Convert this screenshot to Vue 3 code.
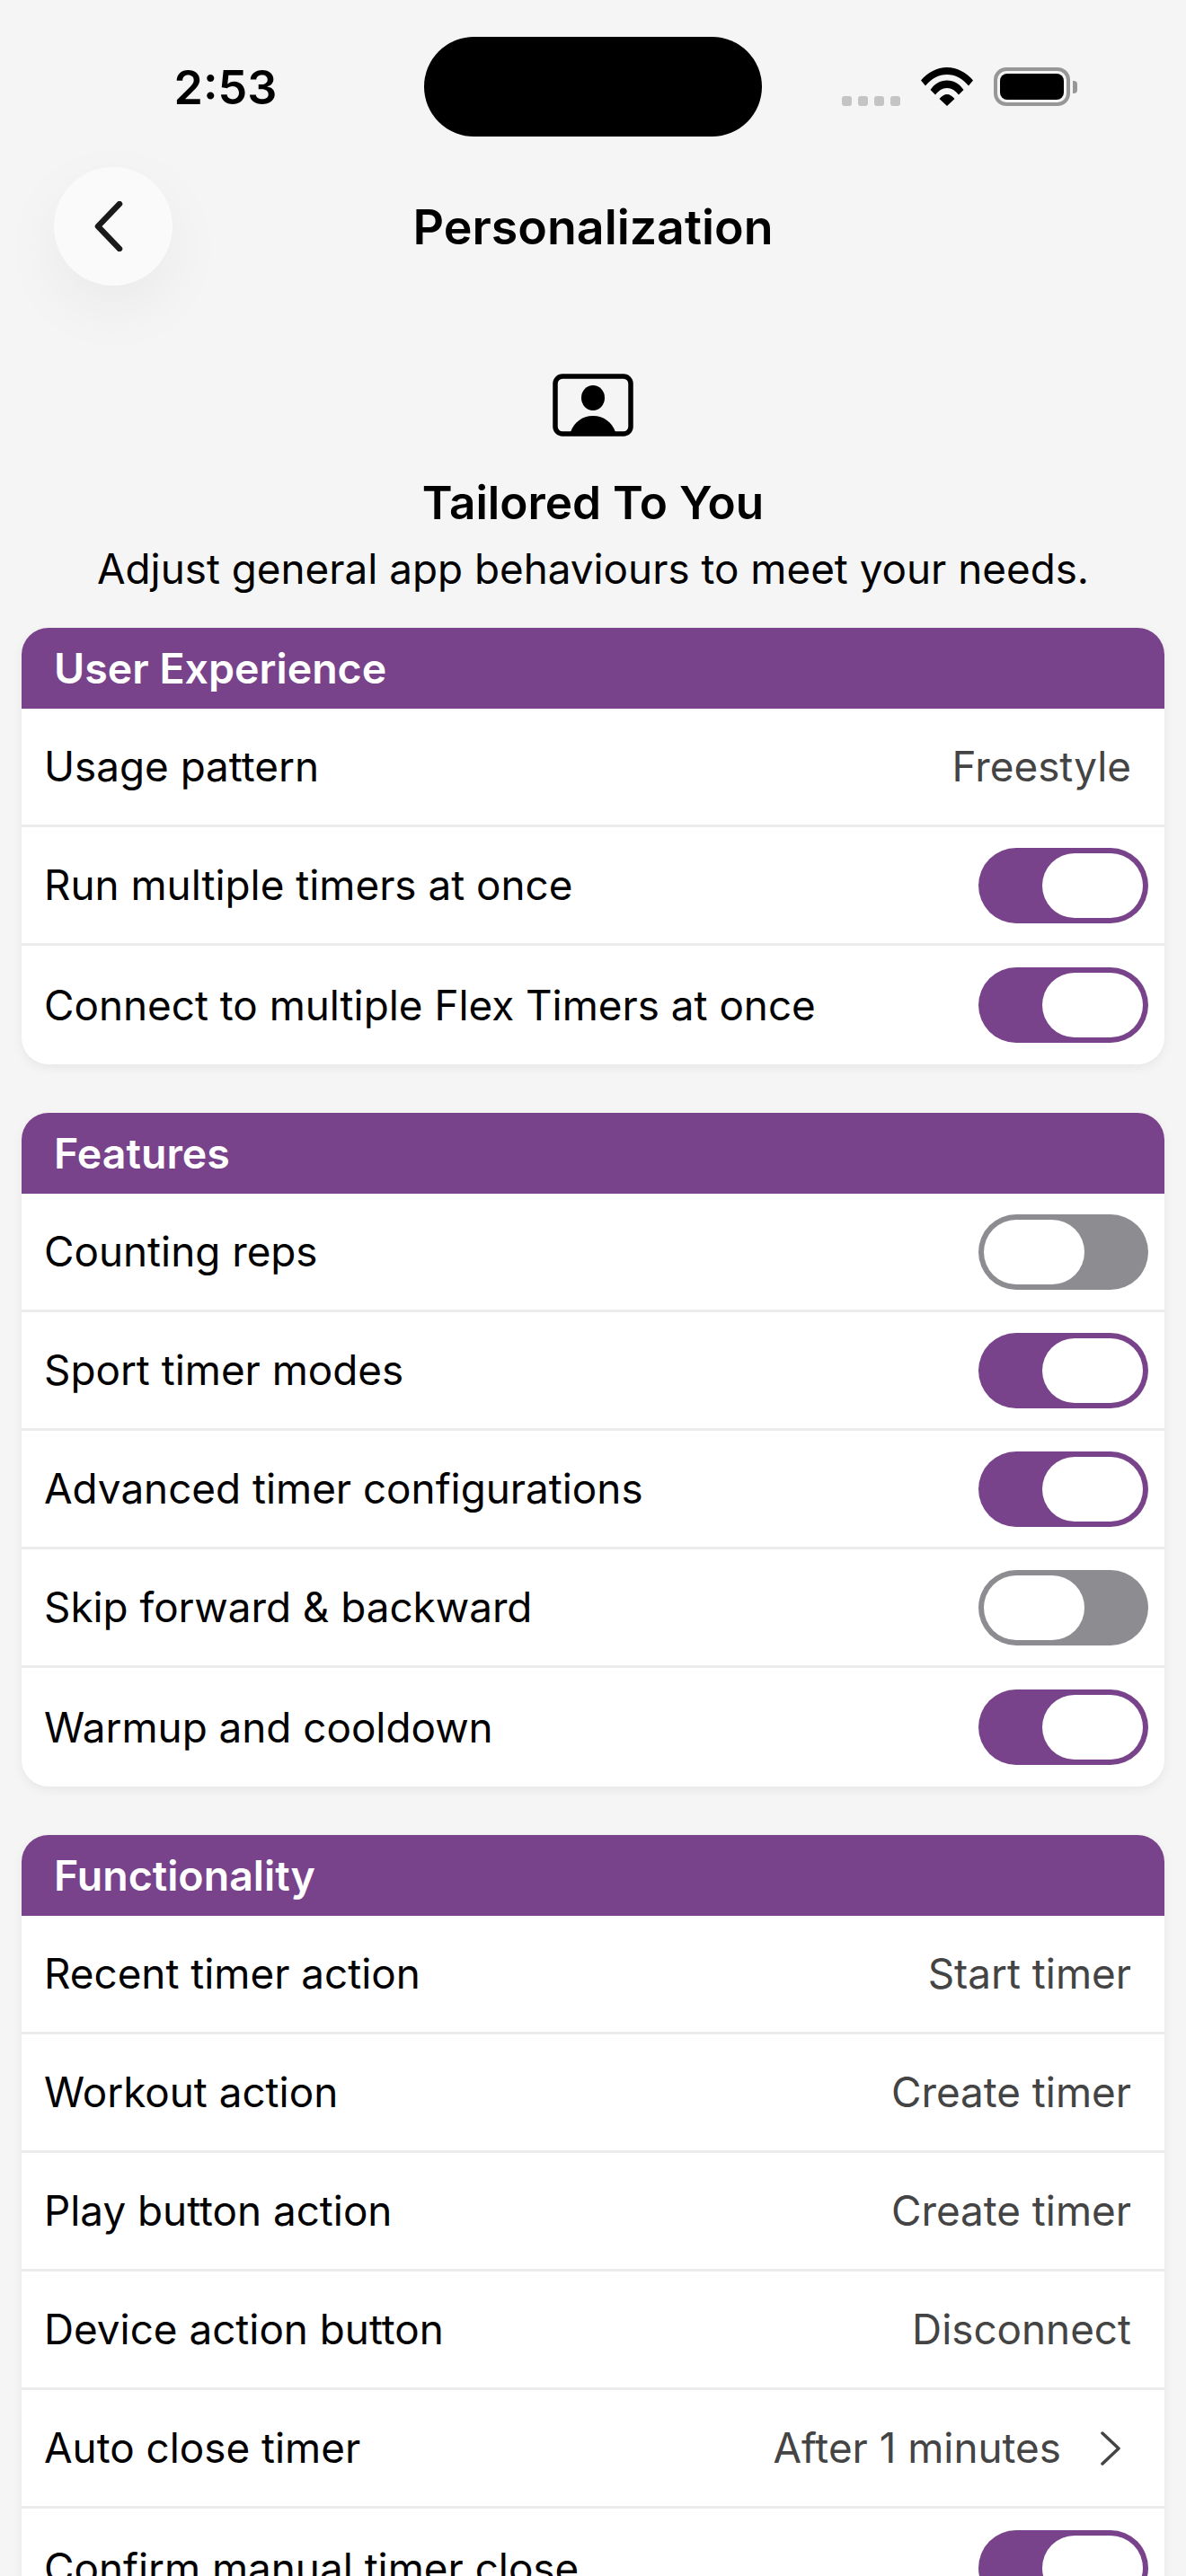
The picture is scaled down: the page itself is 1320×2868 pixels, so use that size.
<template>
  <div class="screen">
    <div class="status-bar">
      <span class="time">2:53</span>
      <div class="island"></div>
      <div class="status-icons">
        <div class="signal">
          <i v-for="n in 4" :key="n"></i>
        </div>
        <svg class="wifi" viewBox="0 0 58 43" width="58" height="43">
          <path d="M0 14.500C7.500 5.500 18 0 29 0s21.500 5.500 29 14.500l-5 6C46.500 12.500 38 8 29 8S11.500 12.500 5 20.500z" fill="#000" />
          <path d="M10.500 25C15 18.500 21.500 14.500 29 14.500S43 18.500 47.500 25l-5.500 5.500C38.500 26 34 23 29 23s-9.500 3-13 7.500z" fill="#000" />
          <path d="M20.500 35C23 32 26 30 29 30s6 2 8.500 5L29 43z" fill="#000" />
        </svg>
        <div class="battery">
          <div class="battery-body"><div class="battery-fill"></div></div>
          <div class="battery-cap"></div>
        </div>
      </div>
    </div>

    <div class="nav">
      <button class="back">
        <svg viewBox="0 0 32 56" width="32" height="56">
          <path d="M28 3 4 28l24 25" fill="none" stroke="#1a1a1a" stroke-width="6.500" stroke-linecap="round" stroke-linejoin="round" />
        </svg>
      </button>
      <div class="nav-title">Personalization</div>
    </div>

    <div class="intro">
      <svg class="intro-icon" viewBox="0 0 90 70" width="90" height="70">
        <rect x="3" y="3" width="84" height="64" rx="8" fill="none" stroke="#000" stroke-width="5.500" />
        <ellipse cx="45" cy="27" rx="13" ry="14" fill="#000" />
        <path d="M20 65C24 54 33 47 45 47s21 7 25 18z" fill="#000" />
      </svg>
      <div class="intro-title">Tailored To You</div>
      <div class="intro-text">Adjust general app behaviours to meet your needs.</div>
    </div>

    <section v-for="group in groups" :key="group.title" class="card">
      <div class="card-head">{{ group.title }}</div>
      <div v-for="row in group.rows" :key="row.label" class="row">
        <span class="label">{{ row.label }}</span>
        <div v-if="row.toggle !== undefined" class="toggle" :class="{ off: !row.toggle }">
          <div class="knob"></div>
        </div>
        <span v-else class="value" :class="{ 'with-chevron': row.chevron }">
          {{ row.value }}
          <svg v-if="row.chevron" viewBox="0 0 24 38" width="24" height="38">
            <path d="M3 2l18 17L3 36" fill="none" stroke="#444" stroke-width="3.500" stroke-linecap="round" stroke-linejoin="round" />
          </svg>
        </span>
      </div>
    </section>
  </div>
</template>

<script setup>
const groups = [
  {
    title: 'User Experience',
    rows: [
      { label: 'Usage pattern', value: 'Freestyle' },
      { label: 'Run multiple timers at once', toggle: true },
      { label: 'Connect to multiple Flex Timers at once', toggle: true }
    ]
  },
  {
    title: 'Features',
    rows: [
      { label: 'Counting reps', toggle: false },
      { label: 'Sport timer modes', toggle: true },
      { label: 'Advanced timer configurations', toggle: true },
      { label: 'Skip forward & backward', toggle: false },
      { label: 'Warmup and cooldown', toggle: true }
    ]
  },
  {
    title: 'Functionality',
    rows: [
      { label: 'Recent timer action', value: 'Start timer' },
      { label: 'Workout action', value: 'Create timer' },
      { label: 'Play button action', value: 'Create timer' },
      { label: 'Device action button', value: 'Disconnect' },
      { label: 'Auto close timer', value: 'After 1 minutes', chevron: true },
      { label: 'Confirm manual timer close', toggle: true }
    ]
  }
]
</script>

<style>
html, body {
  margin: 0;
  background: #f5f5f5;
}
</style>

<style scoped>
.screen {
  height: 2868px;
  overflow: hidden;
  background: #f5f5f5;
  font-family: Inter, "Liberation Sans", sans-serif;
  color: #000;
}

.status-bar {
  display: flex;
  height: 186px;
  padding-top: 41px;
  box-sizing: border-box;
  align-items: flex-start;
}

.time {
  width: 472px;
  padding-top: 27px;
  box-sizing: border-box;
  text-align: center;
  padding-left: 30px;
  font-size: 52px;
  line-height: 60px;
  font-weight: 600;
}

.island {
  width: 376px;
  height: 111px;
  border-radius: 56px;
  background: #000;
}

.status-icons {
  display: flex;
  padding: 34px 0 0 89px;
}

.signal {
  display: flex;
  gap: 7px;
  align-self: flex-end;
  margin-right: 23px;
}

.signal i {
  width: 11px;
  height: 11px;
  border-radius: 3px;
  background: #c4c4c4;
}

.wifi {
  display: block;
  margin-right: 23px;
}

.battery {
  display: flex;
  align-items: center;
}

.battery-body {
  width: 85px;
  height: 43px;
  box-sizing: border-box;
  border: 4px solid #979797;
  border-radius: 14px;
  padding: 3px;
}

.battery-fill {
  height: 100%;
  border-radius: 8px;
  background: #000;
}

.battery-cap {
  width: 5px;
  height: 14px;
  margin-left: 3px;
  border-radius: 0 4px 4px 0;
  background: #979797;
}

.nav {
  display: flex;
  align-items: center;
  height: 132px;
  padding-left: 60px;
}

.back {
  flex: none;
  display: flex;
  align-items: center;
  justify-content: center;
  width: 132px;
  height: 132px;
  padding: 0 10px 0 0;
  border: none;
  border-radius: 50%;
  background: #fafafa;
  box-shadow: 0 24px 70px rgba(0, 0, 0, 0.05);
}

.nav-title {
  flex: 1;
  margin-right: 192px;
  text-align: center;
  font-size: 53.7px;
  font-weight: 600;
}

.intro {
  display: flex;
  flex-direction: column;
  align-items: center;
  padding-top: 98px;
}

.intro-icon {
  display: block;
}

.intro-title {
  margin-top: 42px;
  font-size: 51.3px;
  line-height: 62px;
  font-weight: 600;
}

.intro-text {
  margin-top: 15px;
  font-size: 45.8px;
  line-height: 58px;
}

.card {
  margin: 36px 24px 54px;
  border-radius: 30px;
  background: #fff;
  box-shadow: 0 4px 12px rgba(0, 0, 0, 0.06);
  overflow: hidden;
}

.card-head {
  height: 90px;
  padding-left: 36px;
  background: #79438b;
  color: #fff;
  font-size: 46.5px;
  line-height: 90px;
  font-weight: 600;
}

.row {
  display: flex;
  align-items: center;
  justify-content: space-between;
  box-sizing: border-box;
  height: 132px;
  padding: 0 18px 0 25px;
  border-bottom: 3px solid #ececec;
}

.row:last-child {
  border-bottom: none;
}

.label {
  font-size: 45.8px;
}

.value {
  display: flex;
  align-items: center;
  padding-right: 19px;
  font-size: 45.8px;
  color: #444;
}

.value.with-chevron {
  padding-right: 30px;
}

.value.with-chevron svg {
  margin-left: 43px;
}

.toggle {
  display: flex;
  justify-content: flex-end;
  box-sizing: border-box;
  width: 189px;
  height: 84px;
  padding: 6px;
  border-radius: 42px;
  background: #79438b;
}

.knob {
  width: 112px;
  height: 72px;
  border-radius: 36px;
  background: #fff;
}

.toggle.off {
  justify-content: flex-start;
  background: #8d8c90;
}
</style>
